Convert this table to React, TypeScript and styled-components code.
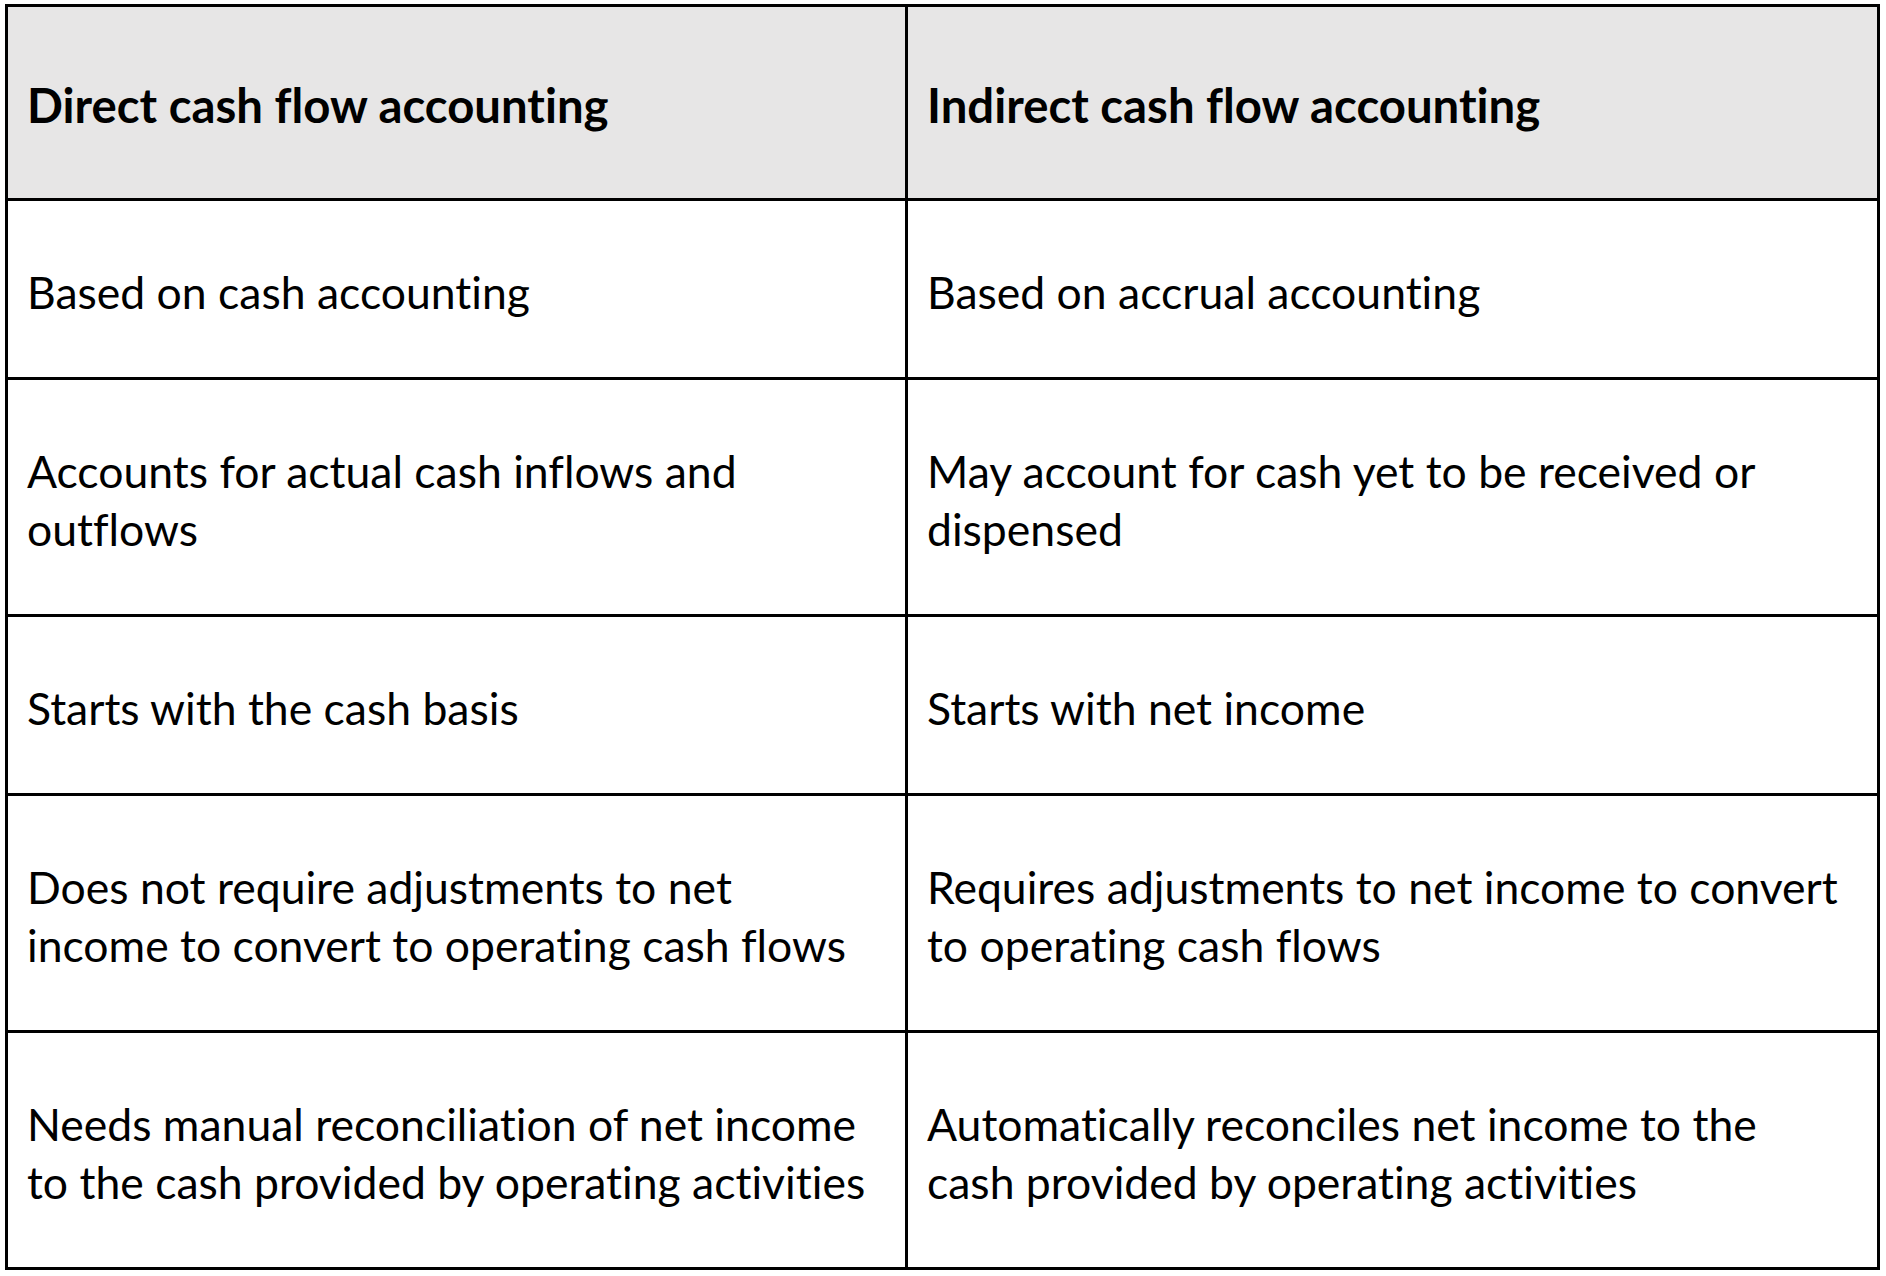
import styled, { createGlobalStyle } from 'styled-components';

const GlobalStyle = createGlobalStyle`
  html, body {
    margin: 0;
    padding: 0;
    background: #ffffff;
  }
  body {
    padding: 4px 0 0 5px;
    font-family: Lato, 'Liberation Sans', sans-serif;
    font-variant-ligatures: none;
    font-feature-settings: 'liga' 0, 'clig' 0;
    color: #000000;
  }
`;

const Table = styled.div`
  display: grid;
  grid-template-columns: 900px 972px;
  width: max-content;
  border-top: 3px solid #000;
  border-left: 3px solid #000;
`;

const Cell = styled.div<{ $head?: boolean; $h: number }>`
  box-sizing: border-box;
  height: ${({ $h }) => $h}px;
  display: flex;
  align-items: center;
  padding: 5px 12px 0 19px;
  border-right: 3px solid #000;
  border-bottom: 3px solid #000;
  background: ${({ $head }) => ($head ? '#e7e6e6' : '#ffffff')};
  font-size: ${({ $head }) => ($head ? '47.3px' : '44.5px')};
  font-weight: ${({ $head }) => ($head ? 700 : 400)};
  line-height: 58px;
`;

const Text = styled.div`
  white-space: nowrap;
`;

const Line = styled.span`
  display: block;
`;

type Row = { h: number; left: string[]; right: string[]; head?: boolean };

const rows: Row[] = [
  { h: 194, head: true, left: ['Direct cash flow accounting'], right: ['Indirect cash flow accounting'] },
  { h: 179, left: ['Based on cash accounting'], right: ['Based on accrual accounting'] },
  {
    h: 237,
    left: ['Accounts for actual cash inflows and', 'outflows'],
    right: ['May account for cash yet to be received or', 'dispensed'],
  },
  { h: 179, left: ['Starts with the cash basis'], right: ['Starts with net income'] },
  {
    h: 237,
    left: ['Does not require adjustments to net', 'income to convert to operating cash flows'],
    right: ['Requires adjustments to net income to convert', 'to operating cash flows'],
  },
  {
    h: 237,
    left: ['Needs manual reconciliation of net income', 'to the cash provided by operating activities'],
    right: ['Automatically reconciles net income to the', 'cash provided by operating activities'],
  },
];

const Lines = ({ lines }: { lines: string[] }) => (
  <Text>
    {lines.map((l) => (
      <Line key={l}>{l}</Line>
    ))}
  </Text>
);

const App = () => (
  <>
    <GlobalStyle />
    <Table>
      {rows.map((r, i) => [
        <Cell key={`l${i}`} $h={r.h} $head={r.head}>
          <Lines lines={r.left} />
        </Cell>,
        <Cell key={`r${i}`} $h={r.h} $head={r.head}>
          <Lines lines={r.right} />
        </Cell>,
      ])}
    </Table>
  </>
);

export default App;
